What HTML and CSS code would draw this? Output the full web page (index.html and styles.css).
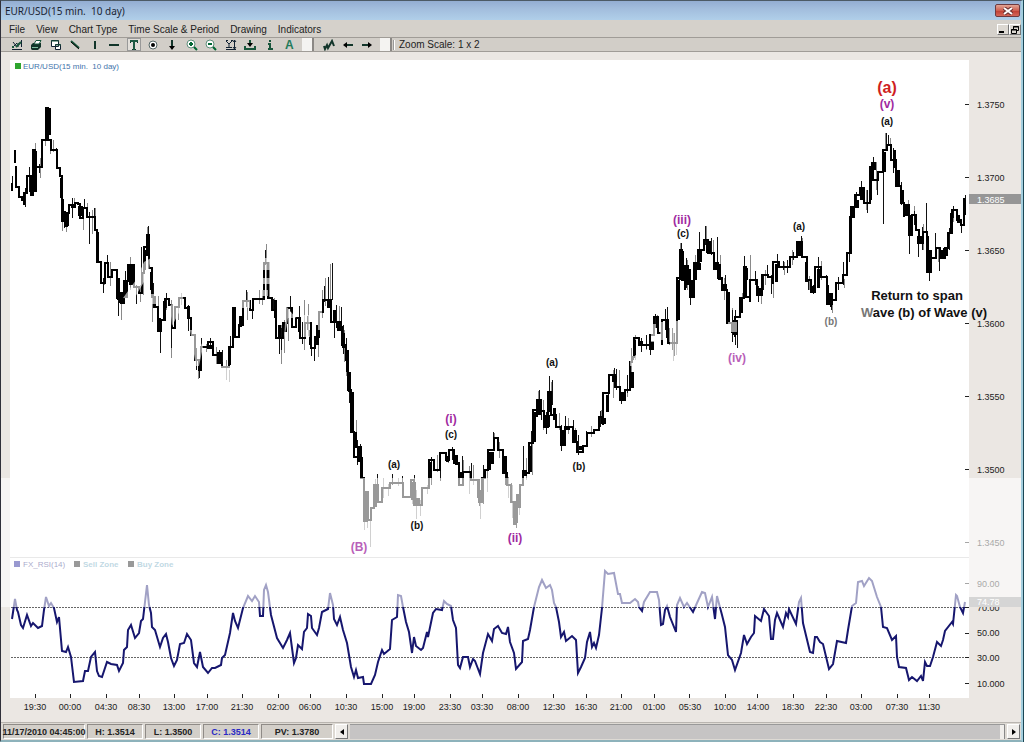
FILE: index.html
```html
<!DOCTYPE html>
<html lang="en">
<head>
    <meta charset="UTF-8">
    <meta name="viewport" content="width=device-width, initial-scale=1.0">
    <title>EUR/USD(15 min. 10 day)</title>
    <link rel="stylesheet" href="styles.css">
</head>
<body>
<div class="window">
    <header class="titlebar">
        <h1>EUR/USD(15 min.&nbsp; 10 day)</h1>
        <button class="close" aria-label="Close">
            <svg width="10" height="8" viewBox="0 0 10 8"><path d="M1 1L9 7M9 1L1 7" stroke="#6b3030" stroke-width="4"/><path d="M1 1L9 7M9 1L1 7" stroke="#fff" stroke-width="2"/></svg>
        </button>
    </header>

    <nav class="menubar">
        <button>File</button>
        <button>View</button>
        <button>Chart Type</button>
        <button>Time Scale &amp; Period</button>
        <button>Drawing</button>
        <button>Indicators</button>
        <div class="mdi">
            <button aria-label="Minimize"><svg width="10" height="9"><path d="M1 7H6" stroke="#000" stroke-width="2"/></svg></button>
            <button aria-label="Restore"><svg width="10" height="9"><path d="M3.500 4V1.500H8.500V5.500H7M3 2H9M1.500 4.500H6.500V8.500H1.500ZM1 5H7" fill="none" stroke="#000"/></svg></button>
        </div>
    </nav>

    <div class="toolbar">
        <div class="tools">
            <button aria-label="Chart"><svg class="icon" viewBox="0 0 14 12"><path d="M2 10.500H12M3 3L7 8M3 8L7 4M8 8V4M11.500 1V8" stroke="#123" stroke-width="1"/><path d="M2 8L4 8M6 8L11 3" stroke="#18563c" stroke-width="2"/></svg></button>
            <button aria-label="Print"><svg class="icon" viewBox="0 0 14 12"><path d="M2 6L4 4H12V8L9 11H3L2 10Z" fill="#12352a"/><path d="M5 5L7 1.500H12L10 5Z" fill="#fff" stroke="#18563c"/><path d="M3 8.500H9" stroke="#7fbfa0"/></svg></button>
            <button aria-label="Cascade"><svg class="icon" viewBox="0 0 14 12"><path d="M2.500 1.500H9.500V7.500H2.500ZM6.500 5.500H11.500V10.500H6.500Z" fill="#fff" stroke="#123"/><path d="M2 2H10M6 6H12" stroke="#18563c" stroke-width="1"/></svg></button>
            <button aria-label="Trend line"><svg class="icon" viewBox="0 0 14 12"><path d="M3 2L11 9" stroke="#18563c" stroke-width="2"/><path d="M3 3L11 10" stroke="#000"/></svg></button>
            <button aria-label="Vertical line"><svg class="icon" viewBox="0 0 14 12"><path d="M7 2V10" stroke="#12352a" stroke-width="2"/></svg></button>
            <button aria-label="Horizontal line"><svg class="icon" viewBox="0 0 14 12"><path d="M2 6H12" stroke="#12352a" stroke-width="2"/></svg></button>
            <button class="pressed" aria-label="Text"><svg class="icon" viewBox="0 0 14 12"><path d="M3.500 4V1.500H10.500V4M5 10.500H9" fill="none" stroke="#12352a"/><path d="M3 2H11M7 2V11" stroke="#1d5a43" stroke-width="2"/></svg></button>
            <button aria-label="Point"><svg class="icon" viewBox="0 0 14 12"><circle cx="7" cy="6" r="4" fill="#fff" stroke="#566"/><circle cx="7" cy="6" r="2"/></svg></button>
            <button aria-label="Arrow down"><svg class="icon" viewBox="0 0 14 12"><path d="M7 1V9" stroke="#12352a" stroke-width="2"/><path d="M4 7H10L7 11Z"/></svg></button>
            <button aria-label="Zoom in"><svg class="icon" viewBox="0 0 14 12"><circle cx="6" cy="5" r="4" fill="#fff" stroke="#5f8f7c"/><path d="M4 5H8M6 3V7M9 8L12 11" stroke="#063" stroke-width="2"/></svg></button>
            <button aria-label="Zoom out"><svg class="icon" viewBox="0 0 14 12"><circle cx="6" cy="5" r="4" fill="#fff" stroke="#5f8f7c"/><path d="M4 5H8M9 8L12 11" stroke="#063" stroke-width="2"/></svg></button>
            <button aria-label="Fit"><svg class="icon" viewBox="0 0 14 12"><path d="M2 10.500H12M2 2L5 5L8 2M5 5V8M2 8.500H8M10.500 1V10M9 3L10.500 1L12 3M9 8L10.500 10L12 8M2 1.500H4M7 1.500H9" fill="none" stroke="#123"/></svg></button>
            <button aria-label="Save"><svg class="icon" viewBox="0 0 14 12"><path d="M2 7V10H12V7" fill="none" stroke="#18563c" stroke-width="2"/><path d="M7 1V5" stroke="#18563c" stroke-width="2"/><path d="M4 4H10L7 8Z"/></svg></button>
            <button aria-label="Info"><svg class="icon" viewBox="0 0 14 12"><path d="M6 1H8V3H6ZM5 4H8V9H10V11H5V9H6V6H5Z" fill="#18563c"/></svg></button>
            <button class="letter">A</button>
        </div>
        <span class="slot"></span>
        <div class="tools tools-nav">
            <button aria-label="Zigzag"><svg class="icon" viewBox="0 0 14 12"><path d="M2 7L3 10L5 6L6 9L10 2L12 7" fill="none" stroke="#12352a" stroke-width="2"/></svg></button>
            <button aria-label="Back"><svg class="icon" viewBox="0 0 14 12"><path d="M4 6H12" stroke="#12352a" stroke-width="2"/><path d="M2 6L6 3V9Z"/></svg></button>
            <button aria-label="Forward"><svg class="icon" viewBox="0 0 14 12"><path d="M2 6H10" stroke="#12352a" stroke-width="2"/><path d="M12 6L8 3V9Z"/></svg></button>
        </div>
        <span class="slot"></span>
        <span class="sep"></span>
        <span class="scale">Zoom Scale: 1 x 2</span>
    </div>

    <main>
    <svg class="chart" viewBox="1 52 1020 670">
        <rect class="paper" x="10" y="60" width="959" height="638"/>
        <path class="divider" d="M10 557.500H969"/>

        <!-- legends -->
        <rect x="15" y="63" width="6" height="6" fill="#2fa52f"/>
        <text class="legend" x="23" y="69" xml:space="preserve">EUR/USD(15 min.  10 day)</text>
        <rect x="14" y="561" width="6" height="6" fill="#00008b"/>
        <text class="legend rsi-name" x="23" y="567">FX_RSI(14)</text>
        <rect x="74" y="561" width="6" height="6" fill="#000"/>
        <text class="legend zone" x="83" y="567">Sell Zone</text>
        <rect x="128" y="561" width="6" height="6" fill="#000"/>
        <text class="legend zone" x="137" y="567">Buy Zone</text>

        <!-- candle wicks -->
        <path class="wick soft" d="M12 176V191M35 143V168M40 158V178M45 136V146M50 140V154M53 140V152M62 205V231M66 222V232M74 198V206M83 212V230M87 203V216M92 210V234M95 208V222M101 264V280M104 270V285M110 262V286M121 300V320M127 280V298M130 257V290M140 285V302M143 268V295M147 227V240M152 285V322M158 296V320M166 295V310M171 300V358M178 300V320M181 293V305M190 318V336M198 362V379M206 344V352M216 347V364M226 360V380M229 370V382M247 292V320M259 290V304M262 290V305M266 244V296M269 262V298M274 298V316M281 325V364M284 320V353M288 307V341M304 300V350M308 304V336M318 332V357M322 290V318M325 278V306M330 264V308M339 306V328M344 330V362M346 340V376M356 420V445M364 480V530M367 492V528M370 508V547M375 479V506M383 478V498M388 484V496M398 478V486M412 492V504M416 490V519M420 500V516M427 485V494M437 455V472M448 451V463M463 460V476M469 466V494M473 465V485M480 500V519M487 468V492M494 433V450M499 442V458M508 477V498M512 485V518M519 490V515M526 458V480M532 427V475M538 391V415M543 400V430M551 382V400M559 413V430M568 418V434M575 428V442M591 426V437M601 410V420M608 390V410M613 370V398M619 370V392M627 382V397M631 348V382M635 335V360M646 338V350M657 315V325M669 328V345M673 333V361M676 340V355M680 243V270M687 260V290M695 255V270M706 226V252M713 240V258M720 255V276M724 278V300M732 308V332M742 293V310M750 255V302M761 280V304M765 270V285M773 280V298M784 262V275M792 250V265M802 238V253M809 276V290M821 261V280M832 296V313M844 279V288M866 190V210M876 162V190M885 133V150M890 138V156M908 200V218M914 206V225M923 224V250M929 262V280M938 248V262M953 206V222"/>
        <path class="wick" d="M12 176V190M25 188V207M29 167V192M39 164V173M56 148V157M64 211V228M72 198V218M84 199V208M89 212V244M94 208V225M103 278V293M107 255V266M118 298V316M125 271V290M136 285V304M141 247V285M148 226V248M153 283V300M160 325V353M166 293V308M171 308V348M188 305V331M196 348V370M199 370V378M201 338V350M210 338V348M219 350V364M222 350V368M230 336V350M246 290V307M252 310V319M265 250V265M273 299V311M279 335V354M281 328V350M290 296V312M299 306V322M302 322V344M307 316V330M311 330V356M314 345V361M324 286V302M328 277V300M332 263V300M334 320V338M336 305V322M341 307V325M343 325V354M346 338V352M349 385V403M357 440V465M360 444V478M377 474V495M392 474V485M402 476V485M414 475V500M431 457V485M440 468V481M452 447V460M462 456V475M471 463V480M479 480V506M483 465V504M493 432V445M505 460V485M511 483V500M516 500V528M523 446V475M531 431V470M539 390V410M541 402V420M546 412V434M549 376V398M552 380V405M561 425V451M565 416V440M573 420V438M578 435V455M586 431V446M600 411V427M608 390V407M614 368V382M616 369V390M621 392V404M627 375V393M633 344V360M641 338V352M646 335V349M650 335V355M655 314V328M665 309V330M667 307V330M672 328V350M674 333V356M681 243V270M686 258V288M690 270V305M699 232V270M705 226V245M711 238V255M717 237V263M725 275V290M732 310V342M735 310V345M737 320V348M744 256V280M755 271V285M758 286V302M763 275V290M767 265V278M771 275V294M777 254V270M783 261V270M787 260V273M793 252V260M801 236V248M808 280V290M813 285V294M818 257V272M826 275V290M831 300V310M838 277V290M843 262V285M849 240V262M856 192V205M861 181V195M867 190V213M873 157V170M877 172V195M883 160V224M886 133V150M888 135V145M893 148V173M901 182V205M909 215V254M914 211V225M918 230V257M922 227V250M926 203V235M929 265V281M935 233V250M939 250V271M949 228V250M953 206V218M961 223V233M965 195V208"/>

        <!-- price -->
        <path class="price" d="M12 183V191M15 150V163M16 166V187H19V197H22V200H24V205V193H27V176H31V195H33V150H35V167H42V140H46V108H48V140H51V150H57V168H60V176H62V200H63V212H65V226H67V213H69V205H75V207V203H78V204H80V218H83V208H87V217H95V230H97V262H101V283H105V263H108V277H112V270H117V298H121V303H124V290V281H128V265H134V287H139V293H142V273H144V247H147V235H149V268H152V297H155V307H158V331H161V320H165V299H169V305H172V328H175V307H179V298H185V308H188V318H191V335H195V360H199V370H201V347H208V342H213V355H218V363H222V367H229V347H233V308H235V337H239V325H243V301H250V310H253V299H264V263H268V298H272V310H276V338H283V323H287V308H292V327H296V318H300V338H305V323H311V348H315V337H319V312H323V300H331V322H337V327H342V345H346V360H348V390H351V432H354V457H358V447H361V478H364V520H366V492H368V520H371V508H374V485H378V502H382V488H390V483H403V497H411V480H414V505H422V488H429V460H434V470H440V453H446V460H449V450H454V463H459V485H463V472H471V480H479V502H482V478H485V470H488V450H494V438H498V450H503V473H507V485H511V502H514V524H516V502H520V485H523V473H529V443H533V410H537V417V400H541V411H544V427H548V392H551V415H556V427H561V445H565V427H573V442H577V452H583V446H587V433H594V430H599V417H603V425V393H609V375H615V387H620V400H625V390H630V362H632V357H634V338H639V345H650V335H654V317H658V333H662V345V320H668V343H677V278H680V250H682V280H685V290V270H690V297H694V263H698V250H704V240H708V253H714V270V263H718V278H722V290H727V323H732V332H735V337V317H740V298H744V267H746V297H750V302V280H757V295H762V275H768V277H773V284V262H779V267H790V257H797V242H802V257H807V280H811V292H815V267H821V277H827V304H831V307V300H836V283H843V275H847V253H851V207H855V195H860V188H864V203H870V167H873V180H878V172H883V150H887V145H891V160H896V186H901V203H904V217V205H909V235H912V215H916V230H919V243H923V232H927V272H931V258H936V248H940V258H945V248H948V233H952V210H957V220H961V225H964V215V198"/>
        <path class="price mid" d="M61 178V198M62 201V222M97 232V262M118 278V300M144 250V270M147 236V256M151 272V290M154 297V308M159 318V332M164 301V320M188 306V318M229 350V365M234 309V337M240 316V327M275 300V318M279 325V338M285 322V332M299 318V332M310 330V345M317 325V345M334 310V323M343 333V348M347 350V372M349 372V392M352 392V432M355 432V448M358 447V462M361 457V478M375 487V507M430 462V478M447 456V462M456 455V465M478 480V498M489 455V470M505 456V472M530 446V472M534 412V442M550 393V412M554 408V420M575 430V442M607 395V412M632 372V388M634 340V355M657 317V328M667 321V338M678 280V320M695 263V280M700 250V262M719 264V280M728 292V322M741 298V313M745 268V296M776 264V282M799 243V256M806 262V282M818 269V288M827 285V304M850 216V252M853 208V218M870 170V200M884 152V172M894 150V168M898 170V187M902 190V204M927 236V270M951 213V232M958 215V223M964 200V215"/>
        <path class="price heavy" d="M34 151V192M48 108V135M66 213V226M73 205V208M80 206V216M121 292V303M125 282V298M131 264V285M209 345V349M219 352V362M329 301V308M339 321V331M365 493V522M376 486V500M413 482V500M417 498V506M461 472V478M481 490V502M491 452V464M515 503V523M518 494V508M524 470V476M538 400V415M547 415V427M562 430V446M567 426V430M581 446V450M603 418V424M614 376V382M623 392V400M640 341V346M651 341V350M681 251V280M686 265V285M691 280V296M698 263V270M708 241V253M716 262V270M724 284V290M735 320V335M745 268V280M759 288V296M812 286V292M830 293V305M856 200V208M862 189V200M873 162V170M905 206V216M910 215V235M919 236V244M929 250V271M941 250V258M945 248V256"/>

        <!-- faded spots -->
        <path class="haze" d="M123 298L136 280L144 262L151 258L148 275L134 299ZM151 294H157V304H151ZM170 306L182 292L184 303L172 326ZM190 330H194L203 347L199 366H196ZM220 366H231V382H220ZM236 300H250V308H240ZM255 258H272V270H255ZM262 278H272V284H262ZM262 290H268V296H262ZM286 306L296 318H288L284 340ZM304 315H310V337H304ZM318 310L322 302L322 330H318ZM630 356H636V366H630ZM651 324H656V342H651ZM660 322H665V340H660ZM670 321H679V361H670ZM728 322H737V332H728Z"/>

        <!-- RSI -->
        <path class="level" d="M11 607.500H966M11 657.500H966"/>
        <polyline class="rsi" points="12,619 15,599 17,610 18,612 21,625 23,628 27,615 31,626 33,623 38,628 42,626 44,610 46,597 49,606 51,603 54,608 57,622 59,617 62,651 66,652 68,647 71,657 74,682 83,681 85,671 88,671 91,657 95,652 97,671 99,676 102,677 107,662 111,664 117,665 119,671 123,663 124,650 127,647 128,630 131,625 135,638 139,633 141,621 143,619 147,585 149,605 151,613 152,627 155,630 160,647 163,638 166,634 168,642 171,658 174,666 177,660 180,644 184,643 187,634 191,640 194,663 197,667 200,652 203,667 208,673 212,668 215,668 221,665 222,658 225,655 230,633 233,613 235,621 238,628 243,608 248,596 252,601 255,596 259,602 260,616 263,616 264,590 266,585 268,592 271,615 277,638 283,648 287,640 290,633 294,663 296,658 298,645 302,649 304,632 307,628 308,614 311,616 312,628 317,635 319,628 322,612 328,609 330,593 333,605 334,619 337,625 340,617 343,630 347,643 351,667 354,677 356,670 358,678 363,677 364,684 371,684 375,675 378,662 382,650 384,654 390,649 392,620 397,617 398,595 401,596 403,607 406,622 409,632 412,653 414,637 416,646 421,650 423,648 427,632 428,637 433,613 436,609 442,610 444,601 447,604 451,606 453,620 456,628 458,665 460,668 463,657 468,657 470,667 473,659 475,661 480,674 483,653 488,634 492,641 494,629 498,626 502,633 506,634 508,627 510,642 514,653 516,669 522,662 523,641 528,639 530,630 534,607 539,587 542,580 546,588 550,585 552,590 554,603 556,607 559,622 561,637 564,632 566,641 572,636 576,640 578,673 581,667 585,658 587,642 590,632 592,647 594,643 596,648 599,635 602,608 605,571 608,574 614,573 618,594 620,594 622,603 630,603 635,599 638,602 639,607 642,611 644,602 650,592 657,592 659,600 661,625 663,624 665,610 667,606 670,617 676,632 677,605 680,598 684,607 687,603 693,612 697,603 702,592 705,593 708,607 712,597 715,619 717,596 722,615 725,627 728,655 732,660 735,670 741,653 744,635 747,644 751,637 754,633 755,616 761,621 764,609 769,616 771,639 773,639 775,620 777,613 783,627 786,613 788,617 789,609 796,624 799,602 801,598 803,623 810,652 813,653 815,637 817,637 820,642 823,644 829,669 833,664 837,641 846,643 848,630 852,606 856,603 858,582 862,581 864,586 869,578 872,581 877,597 881,607 883,627 887,628 892,640 896,636 897,657 899,667 906,668 909,680 912,677 917,681 921,676 923,681 925,662 927,666 930,666 933,657 937,642 941,646 943,640 945,631 952,622 953,624 956,595 957,596 960,607 963,613 965,602"/>

        <!-- value axis -->
        <path class="tick" d="M965 104.500H969M965 177.500H969M965 250.500H969M965 323.500H969M965 396.500H969M965 469.500H969M965 542.500H969M965 583.500H969M965 607.500H969M965 633.500H969M965 657.500H969M965 683.500H969"/>
        <rect class="marker" x="969" y="194" width="52" height="10"/>
        <g class="axis">
            <text x="977" y="108">1.3750</text>
            <text x="977" y="181">1.3700</text>
            <text class="current" x="977" y="203">1.3685</text>
            <text x="977" y="254">1.3650</text>
            <text x="977" y="327">1.3600</text>
            <text x="977" y="400">1.3550</text>
            <text x="977" y="473">1.3500</text>
            <text x="977" y="546">1.3450</text>
            <text x="977" y="587">90.00</text>
            <text x="977" y="611">70.00</text>
            <text x="977" y="636">50.00</text>
            <text x="977" y="661">30.00</text>
            <text x="977" y="687">10.000</text>
        </g>
        <rect class="marker" x="969" y="597" width="52" height="10"/>
        <text class="axis current" x="977" y="605">74.78</text>

        <!-- time axis -->
        <path class="tick" d="M35.500 694V698M70.500 694V698M106.500 694V698M139.500 694V698M174.500 694V698M207.500 694V698M242.500 694V698M278.500 694V698M310.500 694V698M346.500 694V698M382.500 694V698M414.500 694V698M450.500 694V698M482.500 694V698M518.500 694V698M553.500 694V698M586.500 694V698M621.500 694V698M654.500 694V698M689.500 694V698M725.500 694V698M757.500 694V698M793.500 694V698M826.500 694V698M861.500 694V698M897.500 694V698M929.500 694V698"/>
        <g class="axis time">
            <text x="35" y="710">19:30</text>
            <text x="70" y="710">00:00</text>
            <text x="106" y="710">04:30</text>
            <text x="139" y="710">08:30</text>
            <text x="174" y="710">13:00</text>
            <text x="207" y="710">17:00</text>
            <text x="242" y="710">21:30</text>
            <text x="278" y="710">02:00</text>
            <text x="310" y="710">06:00</text>
            <text x="346" y="710">10:30</text>
            <text x="382" y="710">15:00</text>
            <text x="414" y="710">19:00</text>
            <text x="450" y="710">23:30</text>
            <text x="482" y="710">03:30</text>
            <text x="518" y="710">08:00</text>
            <text x="554" y="710">12:30</text>
            <text x="586" y="710">16:30</text>
            <text x="621" y="710">21:00</text>
            <text x="654" y="710">01:00</text>
            <text x="690" y="710">05:30</text>
            <text x="725" y="710">10:00</text>
            <text x="758" y="710">14:00</text>
            <text x="793" y="710">18:30</text>
            <text x="826" y="710">22:30</text>
            <text x="861" y="710">03:00</text>
            <text x="897" y="710">07:30</text>
            <text x="929" y="710">11:30</text>
        </g>

        <!-- translucent band -->
        <rect class="band" x="1" y="478" width="1020" height="129"/>

        <!-- wave labels -->
        <g class="wave minor">
            <text x="394" y="468">(a)</text>
            <text x="417" y="529">(b)</text>
            <text x="451" y="438">(c)</text>
            <text x="552" y="366">(a)</text>
            <text x="579" y="470">(b)</text>
            <text x="683" y="237">(c)</text>
            <text x="799" y="230">(a)</text>
            <text class="dim" x="831" y="325">(b)</text>
            <text x="887" y="125">(a)</text>
        </g>
        <g class="wave major">
            <text class="pale" x="359" y="551">(B)</text>
            <text x="451" y="423">(i)</text>
            <text x="515" y="542">(ii)</text>
            <text x="682" y="224">(iii)</text>
            <text class="pale" x="737" y="362">(iv)</text>
            <text x="887" y="108">(v)</text>
        </g>
        <text class="wave top" x="887" y="93">(a)</text>
        <text class="wave note" x="917" y="300">Return to span</text>
        <text class="wave note" x="924" y="317"><tspan class="dim">W</tspan>ave (b) of Wave (v)</text>
    </svg>
    </main>

    <footer class="status">
        <span class="cell date">11/17/2010 04:45:00</span>
        <span class="cell">H: 1.3514</span>
        <span class="cell">L: 1.3500</span>
        <span class="cell close-price">C: 1.3514</span>
        <span class="cell wide">PV: 1.3780</span>
        <button class="arrow" aria-label="Scroll left"><svg width="6" height="8"><path d="M5 1V7L1 4Z"/></svg></button>
        <div class="track"><span class="thumb"></span></div>
        <button class="arrow" aria-label="Scroll right"><svg width="6" height="8"><path d="M1 1V7L5 4Z"/></svg></button>
    </footer>
</div>
</body>
</html>
```
FILE: styles.css
```css
* {
    box-sizing: border-box;
}
body {
    margin: 0;
    background-color: #1b4654;
    font-family: "Liberation Sans", Arial, sans-serif;
    font-size: 10px;
    color: #222;
}
button {
    padding: 0;
    border: none;
    background: none;
    font: inherit;
    color: inherit;
}
svg {
    display: block;
}
.window {
    margin-right: 1px;
    border-top: 1px solid #4c5a66;
    border-left: 1px solid #30303a;
    border-right: 2px solid #a4cfdf;
    border-bottom: 2px solid #8db2bb;
    background-color: #ebe7e3;
}

/* title bar */
.titlebar {
    display: flex;
    justify-content: space-between;
    align-items: center;
    height: 19px;
    padding: 0 1px 0 4px;
    background: linear-gradient(#93add2, #a2bddd 40%, #b0cfe9);
}
.titlebar h1 {
    margin: 0;
    font: 10px "Noto Sans", "Open Sans", sans-serif;
    color: #1a2433;
}
.close {
    display: flex;
    align-items: center;
    justify-content: center;
    width: 25px;
    height: 13px;
    border: 1px solid #6d3a40;
    border-radius: 2px;
    background: linear-gradient(#e2a596, #cf5f50 50%, #bf3d31 51%, #d4685a);
}

/* menu */
.menubar {
    display: flex;
    align-items: center;
    gap: 11px;
    height: 17px;
    padding-left: 8px;
    padding-top: 2px;
    background-color: #d5d1cb;
}
.mdi {
    display: flex;
    margin-left: auto;
}
.mdi button {
    width: 12px;
    height: 11px;
    border: 1px solid #fff;
    border-right-color: #777;
    border-bottom-color: #777;
    background-color: #dcd8d2;
}

/* toolbar */
.toolbar {
    display: flex;
    align-items: center;
    height: 15px;
    padding-left: 6px;
    border-top: 1px solid #a09c97;
    border-bottom: 1px solid #a09c97;
    background-color: #d2cec8;
}
.tools {
    display: grid;
    grid-template-columns: repeat(15, 1fr);
    width: 292px;
}
.tools-nav {
    grid-template-columns: repeat(3, 1fr);
    width: 58px;
    margin-left: 5px;
}
.tools button {
    display: flex;
    align-items: center;
    justify-content: center;
    height: 13px;
}
.tools .pressed {
    width: 14px;
    margin: 0 auto;
    border: 1px solid #999;
    background-color: #e2dfda;
}
.icon {
    flex: none;
    width: 14px;
    height: 12px;
    fill: #000;
}
.tools .letter {
    font-size: 12px;
    font-weight: bold;
    color: #1f7a5a;
}
.slot {
    width: 12px;
    height: 13px;
    margin-left: 3px;
    border-right: 2px solid #8b8885;
    background-color: #f4f3f1;
}
.sep {
    width: 2px;
    height: 10px;
    margin: 0 4px 0 1px;
    border-left: 1px solid #999;
    border-right: 1px solid #fff;
}

/* chart */
.chart {
    width: 100%;
    height: auto;
}
.paper {
    fill: #fff;
}
.divider {
    stroke: #c8c8c8;
}
.legend {
    font-size: 8px;
    fill: #3f74ab;
}
.rsi-name {
    fill: #25257c;
}
.zone {
    fill: #5f9eb8;
    font-weight: bold;
}
.wick {
    stroke: #111;
    stroke-width: 1;
    shape-rendering: crispEdges;
}
.soft {
    stroke: #8a8a8a;
}
.price {
    fill: none;
    stroke: #000;
    stroke-width: 2;
    shape-rendering: crispEdges;
}
.mid {
    stroke-width: 3;
}
.heavy {
    stroke-width: 5;
}
.haze {
    fill: #fff;
    fill-opacity: 0.6;
}
.level {
    stroke: #666;
    stroke-dasharray: 2 1;
}
.rsi {
    fill: none;
    stroke: #16166e;
    stroke-width: 2;
}
.tick {
    stroke: #222;
}
.axis {
    font-size: 9px;
    fill: #222;
}
.time {
    text-anchor: middle;
}
.marker {
    fill: #969696;
}
.axis .current,
.axis.current {
    fill: #fff;
}
.band {
    fill: #fff;
    fill-opacity: 0.6;
}
.wave {
    font-weight: bold;
    text-anchor: middle;
}
.minor {
    font-size: 10px;
    fill: #111;
}
.major {
    font-size: 12px;
    fill: #a02aa0;
}
.pale {
    fill: #b95fb9;
}
.top {
    font-size: 16px;
    fill: #cf1f1f;
}
.note {
    font-size: 13px;
    fill: #111;
}
.dim {
    fill: #777;
}

/* status bar */
.status {
    display: flex;
    align-items: center;
    gap: 2px;
    height: 18px;
    padding: 1px 1px 1px 2px;
    border-top: 1px solid #b9b5b0;
    background-color: #dedad4;
    font-size: 9px;
    font-weight: bold;
}
.cell {
    width: 56px;
    height: 15px;
    border: 1px solid #8f8b87;
    border-right-color: #fff;
    border-bottom-color: #fff;
    background-color: #d3cfc9;
    line-height: 14px;
    text-align: center;
    white-space: nowrap;
}
.date {
    display: flex;
    justify-content: center;
    width: 82px;
}
.wide {
    width: 72px;
}
.close-price {
    color: #2a2ac4;
}
.arrow {
    display: flex;
    align-items: center;
    justify-content: center;
    width: 13px;
    height: 15px;
    border: 1px solid #fff;
    border-right-color: #777;
    border-bottom-color: #777;
    background-color: #f0eeeb;
}
.track {
    display: flex;
    justify-content: flex-end;
    flex: 1;
    height: 15px;
    border-top: 1px solid #999;
    background-color: #c6c4c4;
}
.thumb {
    width: 5px;
    border-right: 1px solid #888;
    background-color: #f0eeeb;
}
```
